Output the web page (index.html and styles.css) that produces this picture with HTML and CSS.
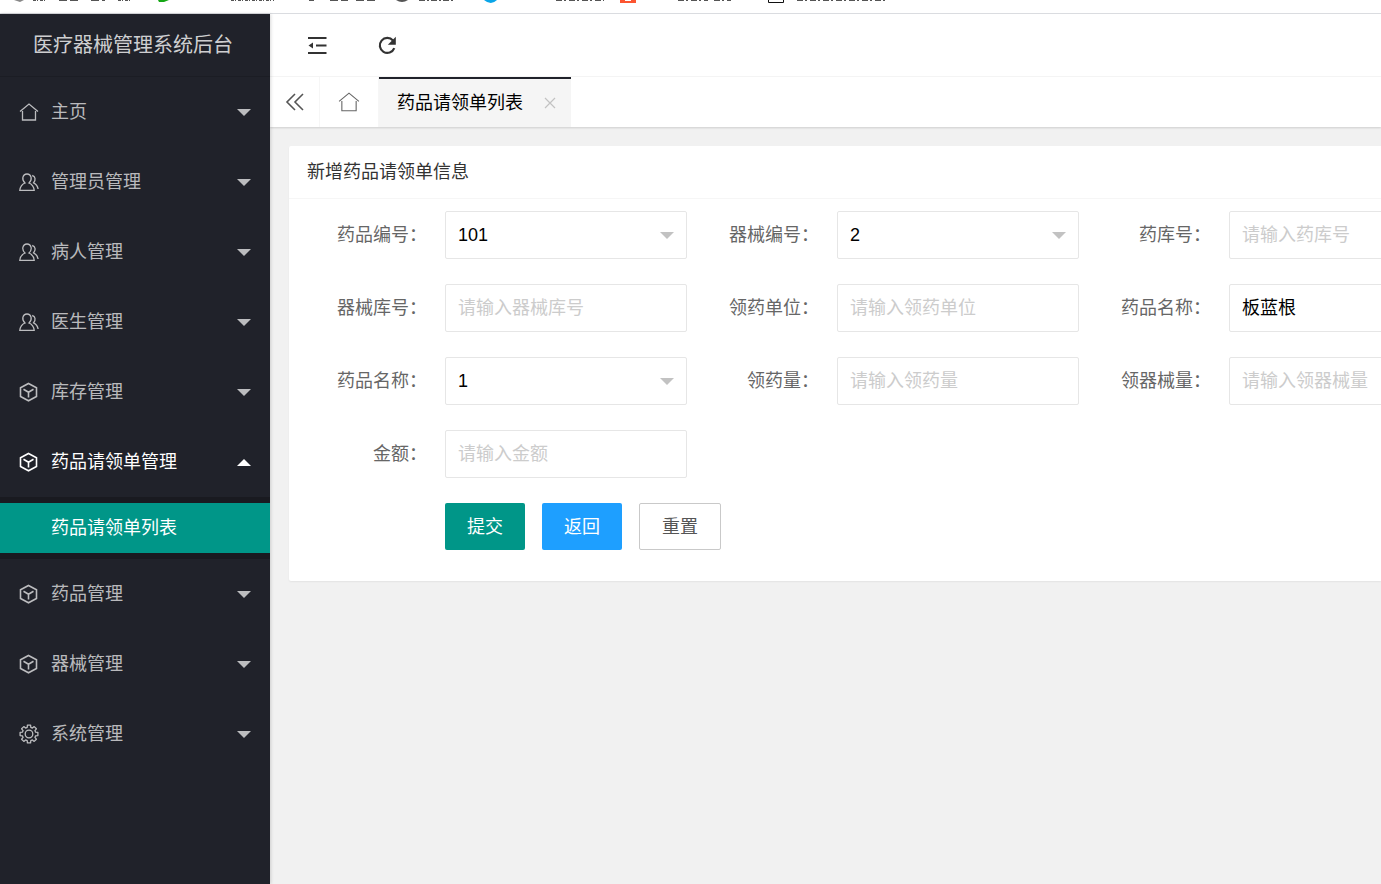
FILE: index.html
```html
<!DOCTYPE html>
<html lang="zh-CN">
<head>
<meta charset="utf-8">
<title>医疗器械管理系统后台</title>
<link rel="stylesheet" href="styles.css">
</head>
<body>
<svg class="defs" aria-hidden="true">
  <symbol id="home" viewBox="0 0 20 20"><path d="M1 9.500 10 2l9 7.500M3.500 9v9h13V9"/></symbol>
  <symbol id="users" viewBox="0 0 20 20"><path d="M6 11C4.200 9.400 3.500 7.400 3.900 5.400 4.400 3.200 6 2 8 2s3.600 1.200 4.100 3.400c.4 2-.3 4-2.100 5.600 3 1.300 4.800 3.500 5.200 7.300H.8C1.200 14.500 3 12.300 6 11zM13.200 3.500c3.200.8 3.800 4.700 1.400 7.300 2.600 1.300 4.100 3.400 4.500 6.200"/></symbol>
  <symbol id="cube" viewBox="0 0 20 20"><path d="m9.500 1.500 8 4.200v8.800l-8 4.300-8-4.300V5.700zM4.500 7.300l5 3 5-3M9.500 10.300v5.200"/></symbol>
  <symbol id="gear" viewBox="0 0 20 20"><path stroke-linejoin="round" d="M16.600 8.200 18.900 8.400V11.600L16.600 11.800 15.900 13.400 17.400 15.200 15.200 17.400 13.400 15.900 11.800 16.600 11.600 18.900H8.400L8.200 16.600 6.600 15.900 4.800 17.400 2.600 15.200 4.100 13.400 3.400 11.800 1.100 11.600V8.400L3.400 8.200 4.100 6.600 2.600 4.800 4.800 2.600 6.600 4.100 8.200 3.400 8.400 1.100h3.200L11.800 3.400 13.400 4.100 15.200 2.600 17.400 4.800 15.900 6.600z"/><circle cx="10" cy="10" r="3.800"/></symbol>
  <symbol id="down" viewBox="0 0 14 7"><path d="M0 0h14L7 7z"/></symbol>
  <symbol id="up" viewBox="0 0 14 7"><path d="M0 7h14L7 0z"/></symbol>
</svg>

<div class="bookmarks" aria-hidden="true">
  <svg width="900" height="4" viewBox="0 0 900 4">
    <path d="M14 0h10l-4 2-3-1z" fill="#888"/>
    <path d="M158 0h11l-5 2h-5z" fill="#16a716"/>
    <path d="M396 0h12q-6 4-12 0z" fill="#555"/>
    <path d="M484 0h13q-6 6-13 0z" fill="#0aa5e8"/>
    <path d="M620 0h16v3h-16z" fill="#fc5531"/><path d="M625 0h6v1h-6z" fill="#fff"/>
    <path d="M768.500 0v2.500h15V0" fill="none" stroke="#111"/>
    <g stroke="#555" fill="none">
      <path d="M33 .5h14M118 .5h13M231 .5h43" stroke-dasharray="3 1 1 2"/>
      <path d="M59 .5h22M91 .5h14M309 .5h5M330 .5h18M356 .5h22" stroke-dasharray="8 3"/>
      <path d="M419 .5h10M431 .5h10M443 .5h12M556 .5h48M678 .5h30M714 .5h17M797 .5h91" stroke-dasharray="6 2 2 3"/>
    </g>
  </svg>
</div>

<div class="app">
  <aside class="side">
    <h1 class="brand">医疗器械管理系统后台</h1>
    <nav>
      <a class="item" href="#"><svg class="icon"><use href="#home"/></svg><span>主页</span><svg class="arrow"><use href="#down"/></svg></a>
      <a class="item" href="#"><svg class="icon"><use href="#users"/></svg><span>管理员管理</span><svg class="arrow"><use href="#down"/></svg></a>
      <a class="item" href="#"><svg class="icon"><use href="#users"/></svg><span>病人管理</span><svg class="arrow"><use href="#down"/></svg></a>
      <a class="item" href="#"><svg class="icon"><use href="#users"/></svg><span>医生管理</span><svg class="arrow"><use href="#down"/></svg></a>
      <a class="item" href="#"><svg class="icon bold"><use href="#cube"/></svg><span>库存管理</span><svg class="arrow"><use href="#down"/></svg></a>
      <a class="item open" href="#"><svg class="icon bold"><use href="#cube"/></svg><span>药品请领单管理</span><svg class="arrow"><use href="#up"/></svg></a>
      <div class="sub"><a class="subitem" href="#">药品请领单列表</a></div>
      <a class="item" href="#"><svg class="icon bold"><use href="#cube"/></svg><span>药品管理</span><svg class="arrow"><use href="#down"/></svg></a>
      <a class="item" href="#"><svg class="icon bold"><use href="#cube"/></svg><span>器械管理</span><svg class="arrow"><use href="#down"/></svg></a>
      <a class="item" href="#"><svg class="icon"><use href="#gear"/></svg><span>系统管理</span><svg class="arrow"><use href="#down"/></svg></a>
    </nav>
  </aside>

  <div class="main">
    <header class="head">
      <button class="tool" type="button" aria-label="收起菜单"><svg width="20" height="20" viewBox="0 0 20 20"><path d="M1 3h18.500M9 10.500h10.500M1 18h18.500" fill="none" stroke="#333" stroke-width="2"/><path d="M1.500 10.500 6 7.500v6z" fill="#333"/></svg></button>
      <button class="tool" type="button" aria-label="刷新"><svg width="20" height="20" viewBox="0 0 20 20"><path d="M16 5.500A7.500 7.500 0 1 0 17.300 13.200" fill="none" stroke="#333" stroke-width="2.200"/><path d="M18.800 1.700v8h-8z" fill="#333"/></svg></button>
    </header>
    <div class="tabs">
      <button class="prev" type="button" aria-label="向左"><svg width="20" height="20" viewBox="0 0 20 20"><path d="M10 2 2 10l8 8M18 2l-8 8 8 8" fill="none" stroke="#555" stroke-width="1.600"/></svg></button>
      <button class="hometab" type="button" aria-label="主页"><svg width="22" height="22"><use href="#home"/></svg></button>
      <div class="tab"><span>药品请领单列表</span><button class="close" type="button" aria-label="关闭"><svg width="12" height="12" viewBox="0 0 12 12"><path d="m1 1 10 10M11 1 1 11" fill="none" stroke="#c2c2c2" stroke-width="1.200"/></svg></button></div>
    </div>
    <main class="content">
      <section class="card">
        <h2 class="card-head">新增药品请领单信息</h2>
        <form class="form">
          <div class="field"><label for="f1">药品编号：</label><div class="pick"><select id="f1"><option>101</option></select><svg class="arrow"><use href="#down"/></svg></div></div>
          <div class="field"><label for="f2">器械编号：</label><div class="pick"><select id="f2"><option>2</option></select><svg class="arrow"><use href="#down"/></svg></div></div>
          <div class="field"><label for="f3">药库号：</label><input id="f3" type="text" placeholder="请输入药库号"></div>
          <div class="field"><label for="f4">器械库号：</label><input id="f4" type="text" placeholder="请输入器械库号"></div>
          <div class="field"><label for="f5">领药单位：</label><input id="f5" type="text" placeholder="请输入领药单位"></div>
          <div class="field"><label for="f6">药品名称：</label><div class="pick"><select id="f6"><option>板蓝根</option></select><svg class="arrow"><use href="#down"/></svg></div></div>
          <div class="field"><label for="f7">药品名称：</label><div class="pick"><select id="f7"><option>1</option></select><svg class="arrow"><use href="#down"/></svg></div></div>
          <div class="field"><label for="f8">领药量：</label><input id="f8" type="text" placeholder="请输入领药量"></div>
          <div class="field"><label for="f9">领器械量：</label><input id="f9" type="text" placeholder="请输入领器械量"></div>
          <div class="field"><label for="f10">金额：</label><input id="f10" type="text" placeholder="请输入金额"></div>
          <div class="actions">
            <button class="btn submit" type="button">提交</button>
            <button class="btn back" type="button">返回</button>
            <button class="btn reset" type="reset">重置</button>
          </div>
        </form>
      </section>
    </main>
  </div>
</div>
</body>
</html>
```
FILE: styles.css
```css
* { box-sizing: border-box; }

body {
  margin: 0;
  height: 100vh;
  display: flex;
  flex-direction: column;
  overflow: hidden;
  background: #fff;
  color: #333;
  font: 400 18px/24px "Liberation Sans", "Noto Sans CJK SC", sans-serif;
}

button, input, select { font: inherit; color: inherit; }
button { border: 0; padding: 0; background: none; display: flex; align-items: center; justify-content: center; }
a { color: inherit; text-decoration: none; }
h1, h2 { margin: 0; font-weight: 400; }
svg { flex: none; display: block; }
.defs { position: absolute; width: 0; height: 0; }

.bookmarks { flex: none; height: 14px; overflow: hidden; border-bottom: 1px solid #dadce0; }

.app { flex: 1; min-height: 0; display: flex; }

.side { flex: none; width: 270px; background: #20222a; color: rgba(255, 255, 255, .7); z-index: 1; box-shadow: 1px 0 3px rgba(0, 0, 0, .15); }
.brand { height: 63px; border-bottom: 1px solid #1b1d24; text-align: center; font-size: 20px; line-height: 62px; padding-right: 4px; color: rgba(255, 255, 255, .8); }
.item { display: flex; align-items: center; height: 70px; padding: 0 19px; }
.item span { flex: 1; margin-left: 12px; }
.icon { width: 20px; height: 20px; fill: none; stroke: currentColor; stroke-width: 1.300; }
.bold { stroke-width: 1.600; }
.arrow { width: 14px; height: 7px; fill: currentColor; }
.open { color: #fff; }
.sub { background: #191a20; padding: 6px 0; }
.subitem { display: block; height: 50px; line-height: 50px; padding-left: 51px; background: #009688; color: #fff; }

.main { flex: 1; min-width: 0; display: flex; flex-direction: column; background: #f1f1f1; }
.head { display: flex; flex: none; height: 63px; padding-left: 12px; background: #fff; border-bottom: 1px solid #f6f6f6; }
.tool { width: 70px; }
.tabs { display: flex; flex: none; height: 50px; background: #fff; box-shadow: 0 1px 2px rgba(0, 0, 0, .15); }
.prev { width: 50px; border-right: 1px solid #f6f6f6; }
.hometab { width: 59px; border-right: 1px solid #f6f6f6; fill: none; stroke: #666; }
.tab { display: flex; align-items: center; gap: 20px; padding: 0 14px 0 18px; background: #f5f5f5; border-top: 2px solid #20222a; color: #000; }
.close { width: 14px; height: 14px; }

.content { padding: 19px 0 0 19px; }
.card { overflow: hidden; background: #fff; border-radius: 2px 0 0 2px; box-shadow: 0 1px 2px rgba(0, 0, 0, .06); }
.card-head { height: 53px; line-height: 52px; padding-left: 18px; font-size: 18px; border-bottom: 1px solid #f6f6f6; }
.form { display: grid; grid-template-columns: repeat(3, 380px); gap: 25px 12px; padding: 12px 0 31px 18px; }
.field { display: flex; align-items: center; height: 48px; }
.field label { width: 138px; padding-right: 18px; text-align: right; color: #666; }
.field input, .pick { flex: 1; min-width: 0; height: 48px; border: 1px solid #e6e6e6; border-radius: 2px; background: #fff; color: #000; }
.field input { padding: 0 12px; }
.field input::placeholder { color: #ccc; opacity: 1; }
.pick { display: flex; align-items: center; padding-right: 12px; }
.pick select { flex: 1; min-width: 0; height: 46px; padding: 0 12px; border: 0; background: none; appearance: none; }
.pick .arrow { fill: #c2c2c2; }
.actions { grid-column: 1 / -1; display: flex; gap: 17px; padding-left: 138px; }
.btn { height: 47px; padding: 0 22px; border-radius: 2px; color: #fff; }
.submit { background: #009688; }
.back { background: #1e9fff; }
.reset { border: 1px solid #c9c9c9; background: #fff; color: #555; }
```
